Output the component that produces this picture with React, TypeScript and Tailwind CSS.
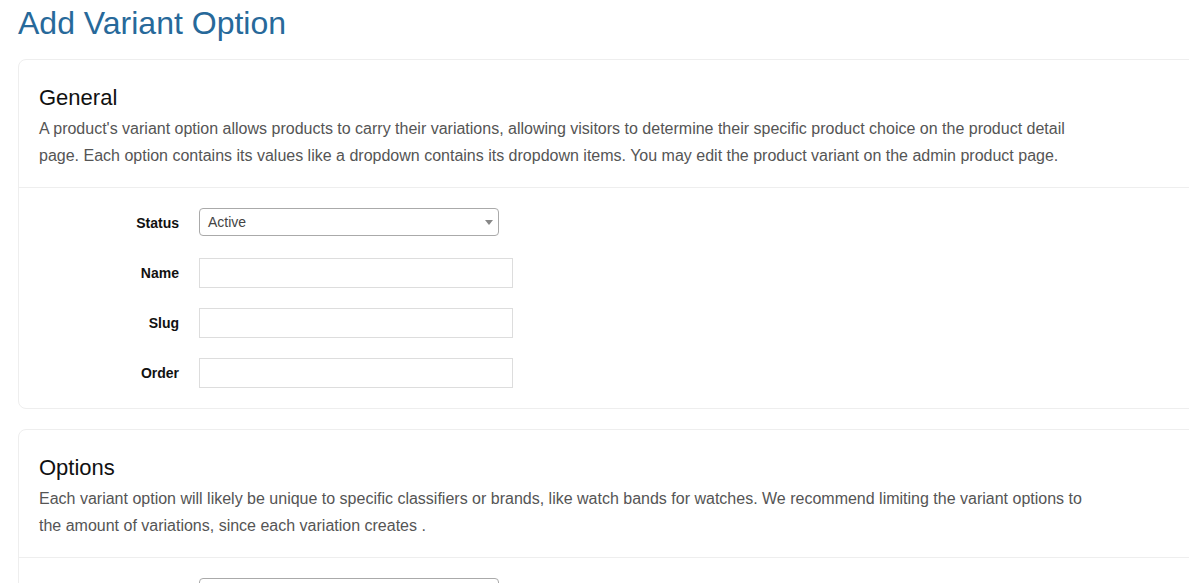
import React from "react";

function Row({ label, children }: { label: string; children: React.ReactNode }) {
  return (
    <div className="flex items-center h-[30px]">
      <label className="w-[160px] text-right pr-[20px] text-[14px] font-bold text-[#111]">{label}</label>
      {children}
    </div>
  );
}

function StatusSelect({ value = "Active" }: { value?: string }) {
  return (
    <div className="relative w-[300px] h-[28px] self-start border border-[#aaa] rounded-[4px] bg-white flex items-center pl-[8px] text-[14px] text-[#444]">
      <span>{value}</span>
      <span className="absolute right-[5px] top-[11px] w-0 h-0 border-l-[4px] border-r-[4px] border-t-[5px] border-l-transparent border-r-transparent border-t-[#888]" />
    </div>
  );
}

function TextInput() {
  return <div className="w-[314px] h-[30px] border border-[#ddd] bg-white" />;
}

function Card({ title, desc, children }: { title: string; desc: string; children: React.ReactNode }) {
  return (
    <div className="w-[1200px] border border-[#eee] rounded-[8px] bg-white">
      <div className="pl-[20px] pt-[23px] pb-[18px] border-b border-[#eee]">
        <h2 className="text-[22px] leading-[30px] text-[#111]">{title}</h2>
        <p className="mt-[2px] max-w-[1050px] text-[16px] leading-[27px] text-[#555]">{desc}</p>
      </div>
      {children}
    </div>
  );
}

export default function App() {
  return (
    <div className="w-[1189px] h-[583px] overflow-hidden bg-white" style={{ fontFamily: '"Liberation Sans", Arial, sans-serif' }}>
      <div className="pl-[18px]">
        <h1 className="text-[32px] leading-[44px] text-[#27699a] pt-[1px] mb-[14px]">Add Variant Option</h1>
        <div className="flex flex-col gap-[20px]">
          <Card
            title="General"
            desc="A product's variant option allows products to carry their variations, allowing visitors to determine their specific product choice on the product detail page. Each option contains its values like a dropdown contains its dropdown items. You may edit the product variant on the admin product page."
          >
            <div className="pl-[20px] py-[20px] flex flex-col gap-[20px]">
              <Row label="Status"><StatusSelect /></Row>
              <Row label="Name"><TextInput /></Row>
              <Row label="Slug"><TextInput /></Row>
              <Row label="Order"><TextInput /></Row>
            </div>
          </Card>
          <Card
            title="Options"
            desc="Each variant option will likely be unique to specific classifiers or brands, like watch bands for watches. We recommend limiting the variant options to the amount of variations, since each variation creates ."
          >
            <div className="pl-[20px] py-[20px] flex flex-col gap-[20px]">
              <Row label=""><StatusSelect value="" /></Row>
            </div>
          </Card>
        </div>
      </div>
    </div>
  );
}
